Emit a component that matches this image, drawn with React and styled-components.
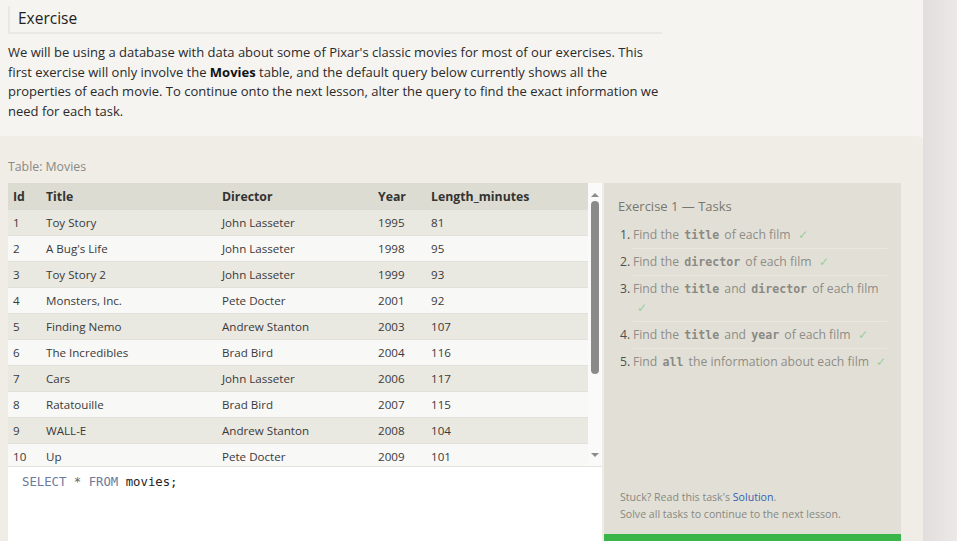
import React from "react";
import styled, { createGlobalStyle } from "styled-components";

const GlobalStyle = createGlobalStyle`
  html, body {
    margin: 0;
    padding: 0;
    background: #e9e6e4;
    font-family: 'Open Sans', 'Noto Sans', sans-serif;
    overflow: hidden;
  }
`;

const Page = styled.div`
  display: flex;
  width: 957px;
  height: 541px;
  overflow: hidden;
`;

const Main = styled.div`
  width: 923px;
  flex: none;
  background: #f5f4f1;
`;

const Strip = styled.div`
  flex: 1;
  background: linear-gradient(to right, #e1dedd, #ebe8e6);
`;

const Intro = styled.section`
  padding: 6px 8px 15px;
`;

const Heading = styled.h2`
  margin: 0;
  width: 644px;
  height: 26px;
  padding-left: 8px;
  border-left: 2px solid #eae8e2;
  border-bottom: 2px solid #eae8e2;
  font-size: 15.5px;
  font-weight: 400;
  line-height: 24px;
  color: #222;
`;

const Lead = styled.p`
  margin: 9px 0 0;
  width: 660px;
  font-size: 13px;
  line-height: 19.6px;
  color: #2a2a2a;

  strong {
    color: #111;
    font-weight: 700;
  }
`;

const Lesson = styled.section`
  background: #efede6;
  border-top-right-radius: 6px;
  padding: 22px 22px 0 8px;
`;

const Caption = styled.div`
  font-size: 12.3px;
  color: #8a8985;
  line-height: 18px;
  margin-bottom: 7px;
`;

const Workspace = styled.div`
  display: grid;
  grid-template-columns: 594px 297px;
  column-gap: 2px;
`;

const Left = styled.div`
  display: flex;
  flex-direction: column;
`;

const TableFrame = styled.div`
  display: flex;
  height: 283px;
  border-bottom: 1px solid #e4e3de;
  background: #f8f8f7;
`;

const TableView = styled.div`
  width: 580px;
  overflow: hidden;
`;

const cols = "33px 176px 156px 53px 1fr";

const HeadRow = styled.div`
  display: grid;
  grid-template-columns: ${cols};
  height: 27px;
  align-items: center;
  background: #dddcd2;
  font-size: 12.3px;
  font-weight: 700;
  color: #333;
`;

const Row = styled.div`
  display: grid;
  grid-template-columns: ${cols};
  height: 25px;
  align-items: center;
  background: ${(p) => (p.$odd ? "#e9e8e1" : "#f8f8f7")};
  border-bottom: 1px solid #e1e0da;
  font-size: 11.6px;
  color: #3a3a3a;
`;

const Cell = styled.div`
  padding-left: 5px;
  white-space: nowrap;
`;

const Scrollbar = styled.div`
  width: 14px;
  display: flex;
  flex-direction: column;
  align-items: center;
  background: #fafafa;
`;

const Arrow = styled.div`
  width: 0;
  height: 0;
  margin: ${(p) => (p.$down ? "auto 0 9px" : "10px 0 4px")};
  border-left: 4px solid transparent;
  border-right: 4px solid transparent;
  ${(p) =>
    p.$down
      ? "border-top: 4px solid #8c8c8c;"
      : "border-bottom: 4px solid #8c8c8c;"}
`;

const Thumb = styled.div`
  width: 8px;
  height: 173px;
  border-radius: 4px;
  background: #8a8a8a;
`;

const Editor = styled.div`
  height: 83px;
  background: #ffffff;
  padding: 7px 14px;
  font-family: 'DejaVu Sans Mono', 'Liberation Mono', monospace;
  font-size: 12.3px;
  line-height: 16px;
  color: #222;
`;

const Kw = styled.span`
  color: ${(p) => (p.$op ? "#666" : "#6c7a9c")};
`;

const Panel = styled.aside`
  display: flex;
  flex-direction: column;
  background: #e2e0d6;
  padding: 13px 14px 0;
`;

const PanelTitle = styled.div`
  font-size: 13px;
  color: #777770;
  line-height: 20px;
  margin-bottom: 6px;
`;

const Tasks = styled.ol`
  list-style: none;
  margin: 0;
  padding: 0;
`;

const Task = styled.li`
  display: flex;
  font-size: 12.2px;
  line-height: 19px;
  color: #8e8d88;
`;

const Num = styled.span`
  width: 13px;
  padding: 3px 0 0 2px;
  flex: none;
  color: #4f4f4c;
`;

const TaskBody = styled.span`
  flex: 1;
  padding: 3px 0 4px;
  border-bottom: ${(p) => (p.$last ? "none" : "1px solid #eae8e1")};
`;

const Code = styled.code`
  font-family: 'DejaVu Sans Mono', 'Liberation Mono', monospace;
  font-weight: 700;
  font-size: 11.6px;
  line-height: 1;
  color: #8a8984;
  margin: 0 2px;
`;

const Check = styled.span`
  color: #9ccf9c;
  margin-left: 4px;
`;

const Footer = styled.div`
  margin-top: auto;
  padding: 0 2px 11px;
  font-size: 10.6px;
  line-height: 17px;
  color: #888882;

  a {
    color: #3560b4;
    text-decoration: none;
  }
`;

const Continue = styled.div`
  height: 30px;
  margin: 0 -14px;
  background: #39b54a;
`;

const movies = [
  [1, "Toy Story", "John Lasseter", 1995, 81],
  [2, "A Bug's Life", "John Lasseter", 1998, 95],
  [3, "Toy Story 2", "John Lasseter", 1999, 93],
  [4, "Monsters, Inc.", "Pete Docter", 2001, 92],
  [5, "Finding Nemo", "Andrew Stanton", 2003, 107],
  [6, "The Incredibles", "Brad Bird", 2004, 116],
  [7, "Cars", "John Lasseter", 2006, 117],
  [8, "Ratatouille", "Brad Bird", 2007, 115],
  [9, "WALL-E", "Andrew Stanton", 2008, 104],
  [10, "Up", "Pete Docter", 2009, 101],
  [11, "Toy Story 3", "Lee Unkrich", 2010, 103],
];

const tasks = [
  ["Find the ", ["title"], " of each film"],
  ["Find the ", ["director"], " of each film"],
  ["Find the ", ["title"], " and ", ["director"], " of each film"],
  ["Find the ", ["title"], " and ", ["year"], " of each film"],
  ["Find ", ["all"], " the information about each film"],
];

export default function App() {
  return (
    <Page>
      <GlobalStyle />
      <Main>
        <Intro>
          <Heading>Exercise</Heading>
          <Lead>
            We will be using a database with data about some of Pixar's
            classic movies for most of our exercises. This first exercise will
            only involve the <strong>Movies</strong> table, and the default
            query below currently shows all the properties of each movie. To
            continue onto the next lesson, alter the query to find the exact
            information we need for each task.
          </Lead>
        </Intro>
        <Lesson>
          <Caption>Table: Movies</Caption>
          <Workspace>
            <Left>
              <TableFrame>
                <TableView>
                  <HeadRow>
                    <Cell>Id</Cell>
                    <Cell>Title</Cell>
                    <Cell>Director</Cell>
                    <Cell>Year</Cell>
                    <Cell>Length_minutes</Cell>
                  </HeadRow>
                  {movies.map((m, i) => (
                    <Row key={m[0]} $odd={i % 2 === 0}>
                      {m.map((v, j) => (
                        <Cell key={j}>{v}</Cell>
                      ))}
                    </Row>
                  ))}
                </TableView>
                <Scrollbar>
                  <Arrow />
                  <Thumb />
                  <Arrow $down />
                </Scrollbar>
              </TableFrame>
              <Editor>
                <Kw>SELECT</Kw> <Kw $op>*</Kw> <Kw>FROM</Kw> movies;
              </Editor>
            </Left>
            <Panel>
              <PanelTitle>Exercise 1 — Tasks</PanelTitle>
              <Tasks>
                {tasks.map((t, i) => (
                  <Task key={i}>
                    <Num>{i + 1}.</Num>
                    <TaskBody $last={i === tasks.length - 1}>
                      {t.map((part, j) =>
                        Array.isArray(part) ? (
                          <Code key={j}>{part[0]}</Code>
                        ) : (
                          <React.Fragment key={j}>{part}</React.Fragment>
                        )
                      )}{" "}
                      <Check>✓</Check>
                    </TaskBody>
                  </Task>
                ))}
              </Tasks>
              <Footer>
                Stuck? Read this task's <a href="#">Solution</a>.
                <br />
                Solve all tasks to continue to the next lesson.
              </Footer>
              <Continue />
            </Panel>
          </Workspace>
        </Lesson>
      </Main>
      <Strip />
    </Page>
  );
}
